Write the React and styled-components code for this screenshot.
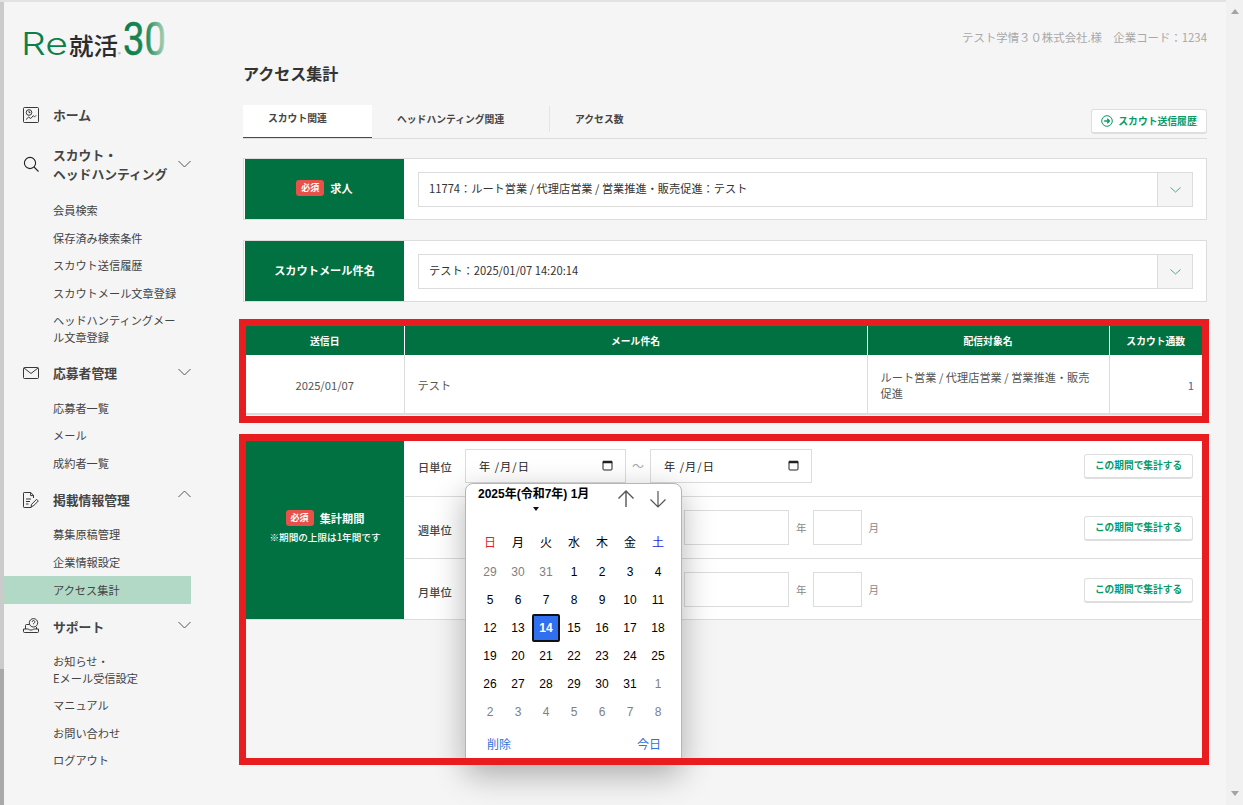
import React from "react";
import styled, { createGlobalStyle } from "styled-components";

const GREEN = "#017141";
const LINE = "#dcdcdc";
const JP = `"Noto Sans CJK JP", "Noto Sans", sans-serif`;

const GlobalStyle = createGlobalStyle`
  html, body {
    margin: 0;
    padding: 0;
    height: 805px;
    overflow: hidden;
    background: #f5f5f5;
    font-family: ${JP};
    color: #333;
  }
  * {
    box-sizing: border-box;
  }
`;

const Page = styled.div`
  display: flex;
  height: 805px;
  border-top: 2px solid #e2e2e2;
`;

const LeftEdge = styled.div`
  flex: 0 0 4px;
  background: linear-gradient(to bottom, #cbcbcb 0, #cbcbcb 667px, #a9a9a9 667px);
`;

const Sidebar = styled.aside`
  flex: 0 0 239px;
  padding-top: 18px;
`;

const Logo = styled.svg`
  display: block;
  margin-left: 19px;
  width: 146px;
  height: 38px;
  overflow: visible;
`;

const Nav = styled.nav`
  margin-top: 47px;
  width: 187px;
`;

const Group = styled.div`
  padding-bottom: ${(p) => p.$gap || 8}px;
`;

const GroupHead = styled.div`
  display: flex;
  align-items: center;
  position: relative;
  padding-left: 19px;
  min-height: 19px;
  margin-bottom: ${(p) => p.$mb ?? 12}px;
`;

const IconBox = styled.span`
  flex: 0 0 16px;
  height: 18px;
  display: flex;
  align-items: center;
  color: #333;
`;

const GroupTitle = styled.span`
  margin-left: 14px;
  font-size: 12.8px;
  line-height: 19px;
  font-weight: 700;
  color: #444;
`;

const Chevron = styled.svg`
  position: absolute;
  right: 0;
  top: ${(p) => p.$top ?? 1}px;
  width: 13px;
  height: 8px;
`;

const SubLink = styled.a`
  display: flex;
  align-items: center;
  min-height: 27.6px;
  padding: ${(p) => (p.$tall ? "5px" : "0")} 14px ${(p) => (p.$tall ? "5px" : "0")} 49px;
  font-size: 11.2px;
  line-height: 17px;
  color: #444;
  background: ${(p) => (p.$active ? "#b1d9c6" : "transparent")};
`;

const Main = styled.main`
  flex: 0 0 964px;
`;

const CompanyLine = styled.div`
  margin-top: 27px;
  text-align: right;
  font-size: 11.4px;
  line-height: 16px;
  color: #a8a8a8;
`;

const PageTitle = styled.h1`
  margin: 16px 0 0;
  font-size: 16px;
  line-height: 24px;
  font-weight: 700;
  color: #333;
`;

const TabBar = styled.div`
  display: flex;
  align-items: flex-end;
  position: relative;
  height: 34px;
  margin-top: 20px;
  border-bottom: 1px solid ${LINE};
`;

const Tab = styled.div`
  width: ${(p) => p.$w}px;
  height: ${(p) => (p.$active ? "33px" : "26px")};
  margin-bottom: ${(p) => (p.$active ? "0" : "6px")};
  padding-left: ${(p) => p.$pad}px;
  padding-bottom: ${(p) => (p.$active ? "6px" : "0")};
  display: flex;
  align-items: center;
  font-size: 9.8px;
  font-weight: 700;
  color: #444;
  background: ${(p) => (p.$active ? "#fff" : "transparent")};
  border-bottom: ${(p) => (p.$active ? `1px solid ${GREEN}` : "none")};
  border-right: ${(p) => (p.$active ? "none" : "1px solid #e4e4e4")};
  &:last-of-type {
    border-right: none;
  }
`;

const HistoryButton = styled.button`
  position: absolute;
  right: 0;
  top: 4px;
  width: 116px;
  height: 25px;
  display: flex;
  align-items: center;
  justify-content: center;
  gap: 5px;
  padding: 0;
  font-family: ${JP};
  font-size: 9.8px;
  font-weight: 700;
  color: #0a9a66;
  background: #fff;
  border: 1px solid #dedede;
  border-bottom-width: 2px;
  border-radius: 3px;
`;

const FormRow = styled.section`
  display: flex;
  height: 62px;
  margin-top: ${(p) => p.$top}px;
  background: #fff;
  border: 1px solid ${LINE};
`;

const GreenLabel = styled.div`
  flex: 0 0 159px;
  display: flex;
  align-items: center;
  justify-content: center;
  gap: 6px;
  margin: 0 1px 0 1px;
  padding-bottom: 2px;
  background: ${GREEN};
  color: #fff;
  font-size: 11.2px;
  font-weight: 700;
`;

const Required = styled.span`
  display: inline-block;
  padding: 0 5px;
  height: 16px;
  line-height: 15px;
  font-size: 9px;
  font-weight: 700;
  color: #fff;
  background: #e8514a;
  border-radius: 3px;
`;

const SelectBox = styled.div`
  flex: 1;
  display: flex;
  height: 35px;
  margin: 13px 13px 0 13px;
  border: 1px solid ${LINE};
`;

const SelectText = styled.div`
  flex: 1;
  padding-left: 10px;
  font-size: 11.2px;
  line-height: 31px;
  color: #333;
`;

const SelectArrow = styled.div`
  flex: 0 0 35px;
  display: flex;
  align-items: center;
  justify-content: center;
  background: #f5f5f5;
  border-left: 1px solid ${LINE};
`;

const RedFrame = styled.div`
  position: relative;
  margin: ${(p) => p.$top}px -2px 0 -4px;
  height: ${(p) => p.$h}px;
  padding: 7px;
  &::after {
    content: "";
    position: absolute;
    inset: 0;
    border: 7px solid #e91d1f;
    pointer-events: none;
    z-index: 3;
  }
`;

const Table = styled.table`
  width: 100%;
  table-layout: fixed;
  border-collapse: collapse;
  background: #fff;
`;

const Th = styled.th`
  height: 29px;
  padding: 0;
  width: ${(p) => (p.$w ? `${p.$w}px` : "auto")};
  font-size: 9.8px;
  font-weight: 700;
  color: #fff;
  background: ${GREEN};
  border-left: 1px solid #fff;
  &:first-child {
    border-left: none;
  }
`;

const Td = styled.td`
  height: 59px;
  padding: 2px ${(p) => (p.$align === "right" ? "8px" : "13px")} 0 13px;
  font-size: 11.2px;
  line-height: 16px;
  color: ${(p) => p.$color || "#555"};
  text-align: ${(p) => p.$align || "left"};
  border-left: 1px solid ${LINE};
  border-bottom: 2px solid ${LINE};
  &:first-child {
    border-left: none;
  }
`;

const PeriodPanel = styled.div`
  position: relative;
  display: flex;
  height: 179px;
  background: #fff;
  border-bottom: 1px solid ${LINE};
`;

const PeriodLabel = styled.div`
  flex: 0 0 158px;
  display: flex;
  flex-direction: column;
  align-items: center;
  justify-content: center;
  padding-bottom: 6px;
  background: ${GREEN};
  color: #fff;
`;

const PeriodTitle = styled.div`
  display: flex;
  align-items: center;
  gap: 6px;
  font-size: 11.2px;
  font-weight: 700;
`;

const PeriodNote = styled.div`
  margin-top: 4px;
  font-size: 9.6px;
  font-weight: 500;
`;

const PeriodRows = styled.div`
  flex: 1;
  display: flex;
  flex-direction: column;
  border-left: 1px solid #fff;
`;

const PeriodRow = styled.div`
  flex: 0 0 ${(p) => p.$h}px;
  display: flex;
  align-items: center;
  padding: 0 9px ${(p) => p.$bottom || 0}px 13px;
  border-bottom: ${(p) => (p.$last ? "none" : `1px solid ${LINE}`)};
`;

const UnitLabel = styled.span`
  flex: 0 0 47px;
  padding-top: ${(p) => p.$drop ?? 4}px;
  font-size: 11.2px;
  font-weight: 500;
  color: #444;
`;

const DateInput = styled.div`
  display: flex;
  align-items: center;
  justify-content: space-between;
  width: ${(p) => p.$w}px;
  height: 34px;
  padding: 0 12px 0 13px;
  font-size: 11.2px;
  letter-spacing: 1px;
  color: #222;
  background: #fff;
  border: 1px solid ${LINE};
`;

const Tilde = styled.span`
  flex: 0 0 24px;
  text-align: center;
  font-size: 12px;
  color: #aaa;
`;

const NumInput = styled.div`
  width: ${(p) => p.$w}px;
  height: 35px;
  margin-left: ${(p) => p.$left || 0}px;
  background: #fff;
  border: 1px solid ${LINE};
`;

const Unit = styled.span`
  margin-left: 7px;
  font-size: 10.5px;
  color: #888;
`;

const AggregateButton = styled.button`
  width: 109px;
  height: 25px;
  margin-top: 1px;
  margin-left: auto;
  padding: 0 0 1px;
  font-family: ${JP};
  font-size: 9.7px;
  font-weight: 700;
  color: #0a9a66;
  background: #fff;
  border: 1px solid #dedede;
  border-bottom-width: 2px;
  border-radius: 3px;
`;

const Calendar = styled.div`
  position: absolute;
  left: 219px;
  top: 42px;
  width: 217px;
  height: 282px;
  padding: 0 0 0 10px;
  background: #fff;
  border: 1px solid #b5b5b5;
  border-radius: 8px;
  box-shadow: 0 10px 32px rgba(0, 0, 0, 0.3);
  font-family: "Liberation Sans", "Noto Sans CJK JP", sans-serif;
  z-index: 2;
`;

const CalHead = styled.div`
  position: relative;
  height: 43px;
  padding: 2px 0 0 2px;
  font-size: 12px;
  line-height: 17px;
  font-weight: 700;
  color: #000;
`;

const Caret = styled.span`
  position: absolute;
  left: 57px;
  top: 23px;
  width: 0;
  height: 0;
  border-left: 3.5px solid transparent;
  border-right: 3.5px solid transparent;
  border-top: 4px solid #111;
`;

const Arrows = styled.div`
  position: absolute;
  right: 13px;
  top: 5px;
  display: flex;
  gap: 12px;
`;

const CalGrid = styled.div`
  display: grid;
  grid-template-columns: repeat(7, 28px);
  grid-template-rows: 31px;
  grid-auto-rows: 28px;
`;

const WeekDay = styled.div`
  display: flex;
  align-items: center;
  justify-content: center;
  padding-bottom: 3px;
  font-size: 12px;
  color: ${(p) => p.$color || "#000"};
`;

const Day = styled.div`
  display: flex;
  align-items: center;
  justify-content: center;
  font-size: 12px;
  font-weight: ${(p) => (p.$selected ? 700 : 400)};
  color: ${(p) => (p.$selected ? "#fff" : p.$muted ? "#808080" : "#000")};
  background: ${(p) => (p.$selected ? "#2f6ff0" : "transparent")};
  border: ${(p) => (p.$selected ? "2px solid #111" : "none")};
  border-radius: ${(p) => (p.$selected ? "2px" : "0")};
`;

const CalFoot = styled.div`
  display: flex;
  justify-content: space-between;
  padding: 11px 20px 0 11px;
  font-size: 12px;
  line-height: 17px;
  color: #2e74d6;
`;

const Scrollbar = styled.div`
  flex: 0 0 17px;
  margin-left: 19px;
  margin-top: -2px;
  display: flex;
  flex-direction: column;
  align-items: center;
  justify-content: space-between;
  padding: 9px 0;
  background: #f1f1f1;
`;

const ScrollArrow = styled.span`
  width: 0;
  height: 0;
  border-left: 4px solid transparent;
  border-right: 4px solid transparent;
  border-${(p) => (p.$up ? "bottom" : "top")}: 5px solid #a3a3a3;
`;

const Down = ({ top }) => (
  <Chevron $top={top} viewBox="0 0 13 8" fill="none" stroke="#555" strokeWidth="1">
    <path d="M0.5 1 L6.5 7 L12.5 1" />
  </Chevron>
);

const Up = ({ top }) => (
  <Chevron $top={top} viewBox="0 0 13 8" fill="none" stroke="#555" strokeWidth="1">
    <path d="M0.5 7 L6.5 1 L12.5 7" />
  </Chevron>
);

const SmallChevron = () => (
  <svg width="11" height="6" viewBox="0 0 11 6" fill="none" stroke="#3fb58a" strokeWidth="1">
    <path d="M0.5 0.5 L5.5 5 L10.5 0.5" />
  </svg>
);

const CalendarGlyph = () => (
  <svg width="11" height="11" viewBox="0 0 11 11" fill="none" stroke="#222">
    <rect x="1" y="1.5" width="9" height="8.5" rx="1" strokeWidth="1" />
    <rect x="1" y="1" width="9" height="2" fill="#222" strokeWidth="0.5" />
  </svg>
);

const HomeIcon = () => (
  <svg width="16" height="16" viewBox="0 0 16 16" fill="none" stroke="#222" strokeWidth="0.9">
    <rect x="0.5" y="0.5" width="15" height="15" rx="1" />
    <circle cx="6" cy="5.5" r="2.8" />
    <path d="M6 3.8V5.6H7.4M3 12.5l2.6-2.4 2.2 1.4 2.4-2.8 1.4 1.2 1.6-1.6" />
  </svg>
);

const SearchIcon = () => (
  <svg width="16" height="16" viewBox="0 0 16 16" fill="none" stroke="#222" strokeWidth="1.1">
    <circle cx="7" cy="7" r="5.6" />
    <path d="M11 11L15.5 15.5" />
  </svg>
);

const MailIcon = () => (
  <svg width="16" height="12" viewBox="0 0 16 12" fill="none" stroke="#222" strokeWidth="0.9">
    <rect x="0.5" y="0.5" width="15" height="11" rx="1" />
    <path d="M1 1l7 5.5L15 1" />
  </svg>
);

const DocIcon = () => (
  <svg width="16" height="16" viewBox="0 0 16 16" fill="none" stroke="#222" strokeWidth="0.9">
    <path d="M10.5 6V3.4L7.8 0.5H1.2a0.7 0.7 0 0 0-0.7 0.7v13.6a0.7 0.7 0 0 0 0.7 0.7h7.3" />
    <path d="M7.6 0.5V3.6H10.5M3 7h5M3 9.5h4M3 12h2.5" />
    <path d="M8 14.5l0.6-2.2 5-5 1.7 1.7-5 5z" />
  </svg>
);

const SupportIcon = () => (
  <svg width="16" height="16" viewBox="0 0 16 16" fill="none" stroke="#222" strokeWidth="0.9">
    <path d="M2.5 11V7.5a1 1 0 0 1 1-1h3M13.5 9v2" />
    <path d="M0.5 11h5l1 1h3l1-1h5v2.5a1 1 0 0 1-1 1h-13a1 1 0 0 1-1-1z" />
    <circle cx="10.5" cy="4.8" r="4.2" />
    <path d="M9.2 3.8a1.3 1.3 0 1 1 1.9 1.2c-0.4 0.2-0.6 0.5-0.6 1M10.5 6.8v0.3" />
  </svg>
);

const ArrowCircle = () => (
  <svg width="12" height="12" viewBox="0 0 12 12" fill="none" stroke="#0a9a66" strokeWidth="1">
    <circle cx="6" cy="6" r="5.3" />
    <path d="M3.2 6H8.4M6.2 3.8L8.4 6 6.2 8.2" strokeWidth="1.3" />
  </svg>
);

const weekDays = [
  ["日", "#e6202a"],
  ["月"],
  ["火"],
  ["水"],
  ["木"],
  ["金"],
  ["土", "#2a1fe0"]
];

const days = [
  [29, true], [30, true], [31, true], [1], [2], [3], [4],
  [5], [6], [7], [8], [9], [10], [11],
  [12], [13], [14], [15], [16], [17], [18],
  [19], [20], [21], [22], [23], [24], [25],
  [26], [27], [28], [29], [30], [31], [1, true],
  [2, true], [3, true], [4, true], [5, true], [6, true], [7, true], [8, true]
];

const App = () => {
  return (
    <Page>
      <GlobalStyle />
      <LeftEdge />
      <Sidebar>
        <Logo viewBox="0 0 146 38">
          <defs>
            <linearGradient id="logo30" x1="0" x2="1" y1="0" y2="0">
              <stop offset="0" stopColor="#0b7a48" />
              <stop offset="0.55" stopColor="#1f8a58" />
              <stop offset="1" stopColor="#b4d6c0" />
            </linearGradient>
          </defs>
          <text x="-2" y="35" fontFamily="Inter, sans-serif" fontSize="31" fontWeight="300" fill="#0b7f4b" textLength="47" lengthAdjust="spacingAndGlyphs">Re</text>
          <text x="46" y="35" fontFamily="Noto Sans CJK JP, sans-serif" fontSize="24" fontWeight="500" fill="#2b2b2b" textLength="49" lengthAdjust="spacingAndGlyphs">就活</text>
          <text x="95" y="35" fontFamily="Inter, sans-serif" fontSize="4" fill="#777">®</text>
          <text x="100" y="35" fontFamily="Roboto, sans-serif" fontSize="46" fontWeight="400" fill="url(#logo30)" stroke="url(#logo30)" strokeWidth="0.5" textLength="43" lengthAdjust="spacingAndGlyphs">30</text>
        </Logo>
        <Nav>
          <Group $gap={8}>
            <GroupHead $mb={13}>
              <IconBox><HomeIcon /></IconBox>
              <GroupTitle>ホーム</GroupTitle>
            </GroupHead>
          </Group>
          <Group $gap={12}>
            <GroupHead $mb={14}>
              <IconBox><SearchIcon /></IconBox>
              <GroupTitle>スカウト・<br />ヘッドハンティング</GroupTitle>
              <Down top={15} />
            </GroupHead>
            <SubLink>会員検索</SubLink>
            <SubLink>保存済み検索条件</SubLink>
            <SubLink>スカウト送信履歴</SubLink>
            <SubLink>スカウトメール文章登録</SubLink>
            <SubLink $tall>ヘッドハンティングメール文章登録</SubLink>
          </Group>
          <Group $gap={13}>
            <GroupHead>
              <IconBox><MailIcon /></IconBox>
              <GroupTitle>応募者管理</GroupTitle>
              <Down top={5} />
            </GroupHead>
            <SubLink>応募者一覧</SubLink>
            <SubLink>メール</SubLink>
            <SubLink>成約者一覧</SubLink>
          </Group>
          <Group $gap={13}>
            <GroupHead>
              <IconBox><DocIcon /></IconBox>
              <GroupTitle>掲載情報管理</GroupTitle>
              <Up top={0} />
            </GroupHead>
            <SubLink>募集原稿管理</SubLink>
            <SubLink>企業情報設定</SubLink>
            <SubLink $active>アクセス集計</SubLink>
          </Group>
          <Group>
            <GroupHead>
              <IconBox><SupportIcon /></IconBox>
              <GroupTitle>サポート</GroupTitle>
              <Down top={4} />
            </GroupHead>
            <SubLink $tall>お知らせ・<br />Eメール受信設定</SubLink>
            <SubLink>マニュアル</SubLink>
            <SubLink>お問い合わせ</SubLink>
            <SubLink>ログアウト</SubLink>
          </Group>
        </Nav>
      </Sidebar>
      <Main>
        <CompanyLine>テスト学情３０株式会社.様　企業コード：1234</CompanyLine>
        <PageTitle>アクセス集計</PageTitle>
        <TabBar>
          <Tab $active $w={129} $pad={25}>スカウト関連</Tab>
          <Tab $w={178} $pad={25}>ヘッドハンティング関連</Tab>
          <Tab $w={120} $pad={25}>アクセス数</Tab>
          <HistoryButton><ArrowCircle />スカウト送信履歴</HistoryButton>
        </TabBar>
        <FormRow $top={19}>
          <GreenLabel><Required>必須</Required>求人</GreenLabel>
          <SelectBox>
            <SelectText>11774：ルート営業 / 代理店営業 / 営業推進・販売促進：テスト</SelectText>
            <SelectArrow><SmallChevron /></SelectArrow>
          </SelectBox>
        </FormRow>
        <FormRow $top={20}>
          <GreenLabel>スカウトメール件名</GreenLabel>
          <SelectBox>
            <SelectText>テスト：2025/01/07 14:20:14</SelectText>
            <SelectArrow><SmallChevron /></SelectArrow>
          </SelectBox>
        </FormRow>
        <RedFrame $top={17} $h={104}>
          <Table>
            <thead>
              <tr>
                <Th $w={158}>送信日</Th>
                <Th $w={463}>メール件名</Th>
                <Th $w={242}>配信対象名</Th>
                <Th>スカウト通数</Th>
              </tr>
            </thead>
            <tbody>
              <tr>
                <Td $align="center">2025/01/07</Td>
                <Td>テスト</Td>
                <Td>ルート営業 / 代理店営業 / 営業推進・販売促進</Td>
                <Td $align="right" $color="#2a6ea8">1</Td>
              </tr>
            </tbody>
          </Table>
        </RedFrame>
        <RedFrame $top={11} $h={331}>
          <PeriodPanel>
            <PeriodLabel>
              <PeriodTitle><Required>必須</Required>集計期間</PeriodTitle>
              <PeriodNote>※期間の上限は1年間です</PeriodNote>
            </PeriodLabel>
            <PeriodRows>
              <PeriodRow $h={56} $bottom={6}>
                <UnitLabel $drop={2}>日単位</UnitLabel>
                <DateInput $w={161}>年 /月/日<CalendarGlyph /></DateInput>
                <Tilde>〜</Tilde>
                <DateInput $w={162}>年 /月/日<CalendarGlyph /></DateInput>
                <AggregateButton>この期間で集計する</AggregateButton>
              </PeriodRow>
              <PeriodRow $h={62}>
                <UnitLabel>週単位</UnitLabel>
                <NumInput $w={105} $left={219} />
                <Unit>年</Unit>
                <NumInput $w={49} $left={6} />
                <Unit>月</Unit>
                <AggregateButton>この期間で集計する</AggregateButton>
              </PeriodRow>
              <PeriodRow $h={61} $last>
                <UnitLabel>月単位</UnitLabel>
                <NumInput $w={105} $left={219} />
                <Unit>年</Unit>
                <NumInput $w={49} $left={6} />
                <Unit>月</Unit>
                <AggregateButton>この期間で集計する</AggregateButton>
              </PeriodRow>
            </PeriodRows>
            <Calendar>
              <CalHead>
                2025年(令和7年) 1月
                <Caret />
                <Arrows>
                  <svg width="20" height="20" viewBox="0 0 20 20" fill="none" stroke="#555" strokeWidth="1.4">
                    <path d="M10 18V2M2.5 9.5L10 2l7.5 7.5" />
                  </svg>
                  <svg width="20" height="20" viewBox="0 0 20 20" fill="none" stroke="#555" strokeWidth="1.2">
                    <path d="M10 2V18M2.5 10.5L10 18l7.5-7.5" />
                  </svg>
                </Arrows>
              </CalHead>
              <CalGrid>
                {weekDays.map(([d, c]) => (
                  <WeekDay key={d} $color={c}>{d}</WeekDay>
                ))}
                {days.map(([d, muted], i) => (
                  <Day key={i} $muted={muted} $selected={d === 14}>{d}</Day>
                ))}
              </CalGrid>
              <CalFoot>
                <span>削除</span>
                <span>今日</span>
              </CalFoot>
            </Calendar>
          </PeriodPanel>
        </RedFrame>
      </Main>
      <Scrollbar>
        <ScrollArrow $up />
        <ScrollArrow />
      </Scrollbar>
    </Page>
  );
};

export default App;
